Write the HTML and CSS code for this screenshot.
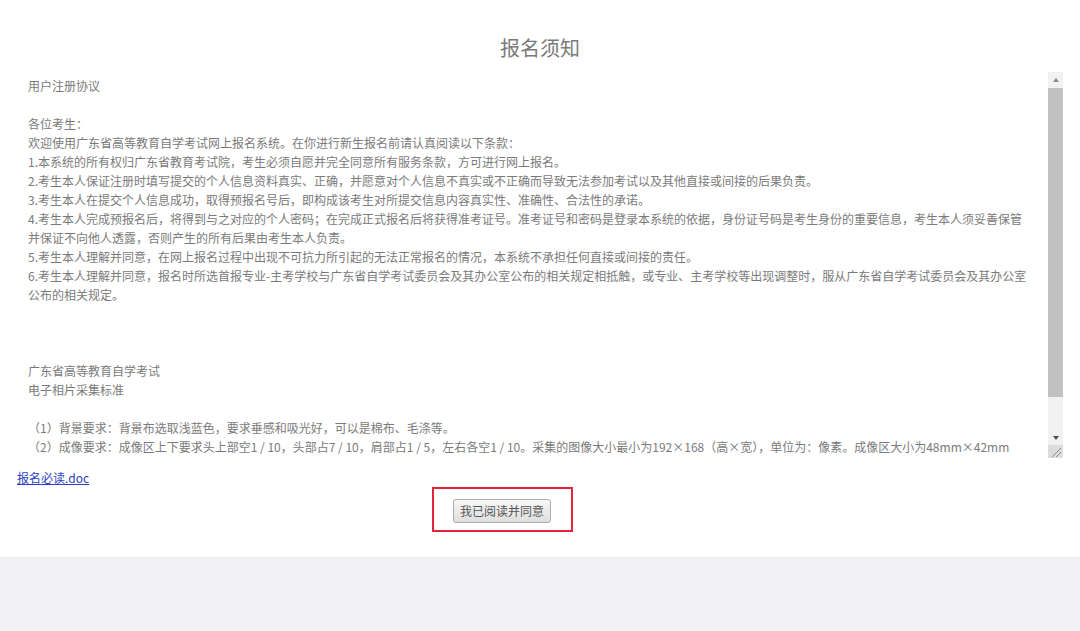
FILE: index.html
```html
<!DOCTYPE html>
<html lang="zh-CN">
<head>
<meta charset="utf-8">
<title>报名须知</title>
<link rel="stylesheet" href="styles.css">
</head>
<body>
<div class="page">
  <h1 class="title">报名须知</h1>
  <div class="notice-box">
    <div class="notice-text">
      <div class="ln">用户注册协议</div>
      <div class="ln"> </div>
      <div class="ln">各位考生：</div>
      <div class="ln">欢迎使用广东省高等教育自学考试网上报名系统。在你进行新生报名前请认真阅读以下条款：</div>
      <div class="ln">1.本系统的所有权归广东省教育考试院，考生必须自愿并完全同意所有服务条款，方可进行网上报名。</div>
      <div class="ln">2.考生本人保证注册时填写提交的个人信息资料真实、正确，并愿意对个人信息不真实或不正确而导致无法参加考试以及其他直接或间接的后果负责。</div>
      <div class="ln">3.考生本人在提交个人信息成功，取得预报名号后，即构成该考生对所提交信息内容真实性、准确性、合法性的承诺。</div>
      <div class="ln">4.考生本人完成预报名后，将得到与之对应的个人密码；在完成正式报名后将获得准考证号。准考证号和密码是登录本系统的依据，身份证号码是考生身份的重要信息，考生本人须妥善保管</div>
      <div class="ln">并保证不向他人透露，否则产生的所有后果由考生本人负责。</div>
      <div class="ln">5.考生本人理解并同意，在网上报名过程中出现不可抗力所引起的无法正常报名的情况，本系统不承担任何直接或间接的责任。</div>
      <div class="ln">6.考生本人理解并同意，报名时所选首报专业-主考学校与广东省自学考试委员会及其办公室公布的相关规定相抵触，或专业、主考学校等出现调整时，服从广东省自学考试委员会及其办公室</div>
      <div class="ln">公布的相关规定。</div>
      <div class="ln"> </div>
      <div class="ln"> </div>
      <div class="ln"> </div>
      <div class="ln">广东省高等教育自学考试</div>
      <div class="ln">电子相片采集标准</div>
      <div class="ln"> </div>
      <div class="ln">（1）背景要求：背景布选取浅蓝色，要求垂感和吸光好，可以是棉布、毛涤等。</div>
      <div class="ln">（2）成像要求：成像区上下要求头上部空1 / 10，头部占7 / 10，肩部占1 / 5，左右各空1 / 10。采集的图像大小最小为192×168（高×宽），单位为：像素。成像区大小为48mm×42mm</div>
    </div>
    <div class="scrollbar">
      <div class="sb-btn"><span class="tri-up"></span></div>
      <div class="sb-track"><div class="sb-thumb"></div></div>
      <div class="sb-btn sb-down"><span class="tri-down"></span></div>
      <div class="sb-resize">
        <svg width="15" height="13" viewBox="0 0 15 13"><line x1="13" y1="3" x2="4" y2="12" stroke="#8a8a8a" stroke-width="1"/><line x1="13" y1="7" x2="8" y2="12" stroke="#8a8a8a" stroke-width="1"/></svg>
      </div>
    </div>
  </div>
  <a class="download" href="#">报名必读.doc</a>
  <div class="agree-row">
    <div class="highlight">
      <button class="agree-btn" type="button">我已阅读并同意</button>
    </div>
  </div>
</div>
<div class="footer"></div>
</body>
</html>
```
FILE: styles.css
```css
html, body {
  margin: 0;
  padding: 0;
  background: #ffffff;
}
body {
  font-family: "Noto Sans CJK SC", "Noto Sans", sans-serif;
  color: #777777;
  width: 1080px;
  height: 631px;
  overflow: hidden;
}
.page {
  height: 557px;
  box-sizing: border-box;
  padding: 34px 17px 0 17px;
  background: #ffffff;
}
.title {
  margin: 0;
  font-size: 20px;
  line-height: 28px;
  font-weight: normal;
  color: #7a7a7a;
  text-align: center;
}
.notice-box {
  margin-top: 10px;
  width: 1046px;
  height: 386px;
  display: flex;
  background: #ffffff;
}
.notice-text {
  flex: 1;
  overflow: hidden;
  padding: 4px 0 0 11px;
  font-size: 12px;
  line-height: 19px;
  color: #7a7a7a;
}
.ln {
  white-space: pre;
  height: 19px;
}
.scrollbar {
  width: 15px;
  display: flex;
  flex-direction: column;
  background: #f1f1f1;
}
.sb-btn {
  height: 16px;
  display: flex;
  align-items: center;
  justify-content: center;
  background: #f1f1f1;
}
.sb-down {
  height: 15px;
}
.tri-up {
  width: 0;
  height: 0;
  border-left: 3px solid transparent;
  border-right: 3px solid transparent;
  border-bottom: 4px solid #8a8a8a;
}
.tri-down {
  width: 0;
  height: 0;
  border-left: 3px solid transparent;
  border-right: 3px solid transparent;
  border-top: 4px solid #505050;
}
.sb-track {
  flex: 1;
  display: flex;
  flex-direction: column;
}
.sb-thumb {
  height: 309px;
  background: #c1c1c1;
}
.sb-resize {
  height: 13px;
  background: #dcdcdc;
  display: flex;
}
.download {
  display: block;
  width: max-content;
  margin-top: 10px;
  font-size: 12px;
  line-height: 19px;
  color: #2a3fc6;
  text-decoration: underline;
}
.agree-row {
  display: flex;
  padding-left: 415px;
}
.highlight {
  width: 141px;
  height: 45px;
  box-sizing: border-box;
  border: 2px solid #e3243a;
  padding: 8px 0 0 19px;
}
.agree-btn {
  width: 98px;
  height: 24px;
  padding: 0;
  font-family: "Noto Sans CJK SC", sans-serif;
  font-size: 12px;
  line-height: 22px;
  color: #555555;
  border: 1px solid #adadad;
  border-radius: 3px;
  background: linear-gradient(#f7f7f7, #dedede);
}
.footer {
  height: 74px;
  background: #f2f2f4;
  border-top: 1px solid #ececee;
}
```
